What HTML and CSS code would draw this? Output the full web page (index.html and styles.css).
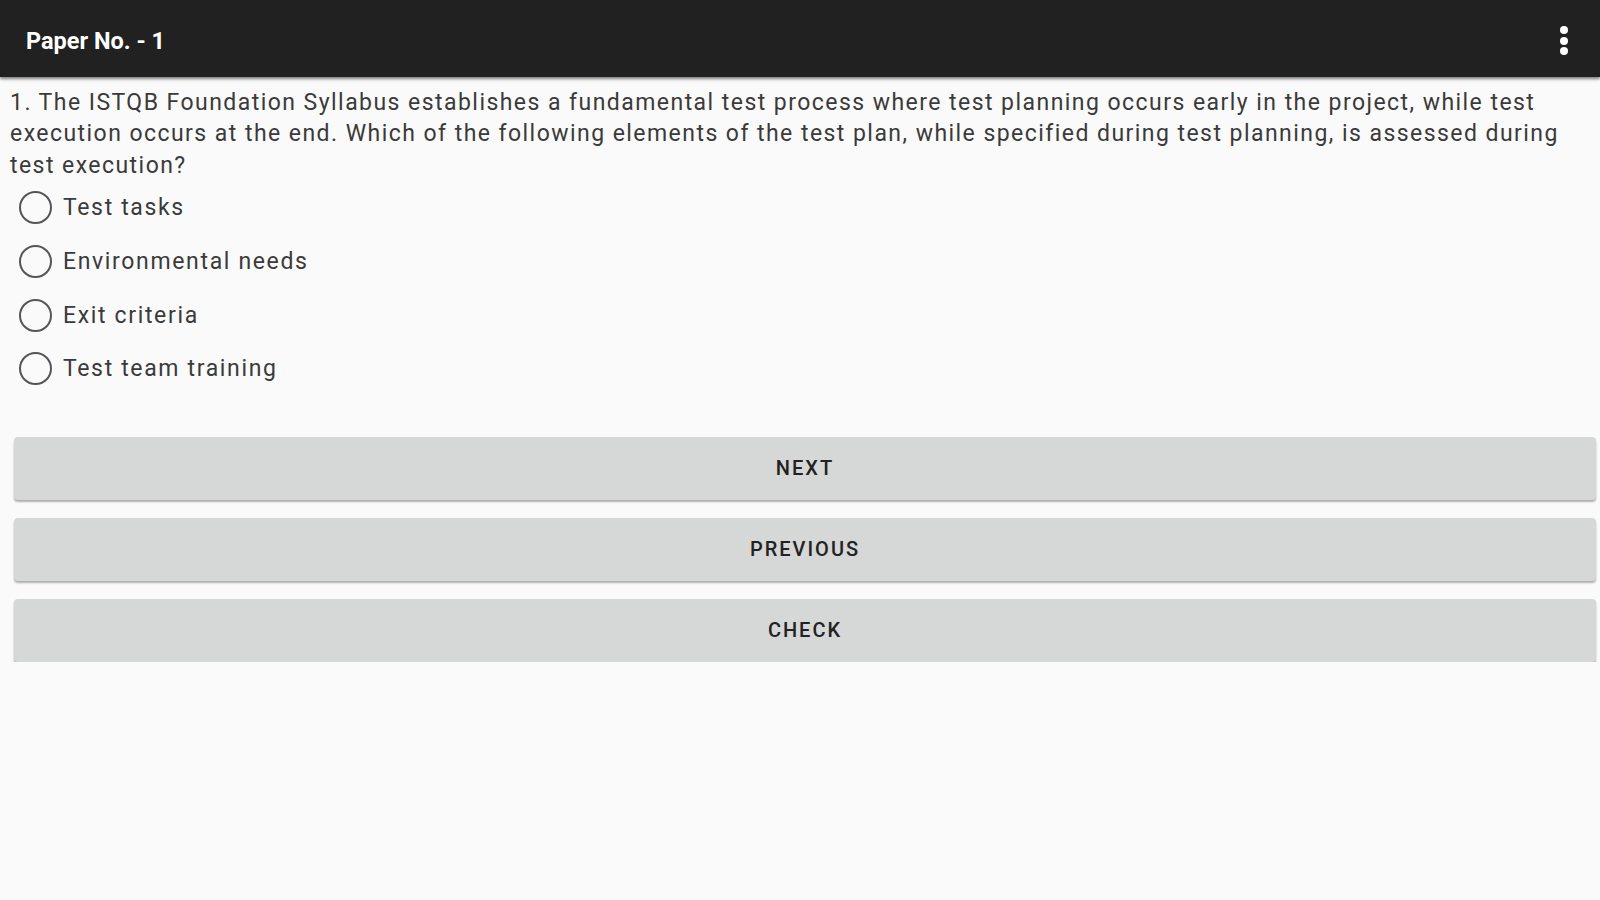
FILE: index.html
```html
<!DOCTYPE html>
<html lang="en">
<head>
<meta charset="utf-8">
<title>Paper No. - 1</title>
<link rel="stylesheet" href="styles.css">
</head>
<body>
<header class="appbar">
  <div class="appbar-title">Paper No. - 1</div>
  <div class="overflow" aria-label="More options">
    <span class="dot"></span><span class="dot"></span><span class="dot"></span>
  </div>
</header>
<main class="content">
  <p class="question">1. The ISTQB Foundation Syllabus establishes a fundamental test process where test planning occurs early in the project, while test execution occurs at the end. Which of the following elements of the test plan, while specified during test planning, is assessed during test execution?</p>
  <div class="options">
    <label class="option"><span class="radio"></span><span class="option-text">Test tasks</span></label>
    <label class="option"><span class="radio"></span><span class="option-text">Environmental needs</span></label>
    <label class="option"><span class="radio"></span><span class="option-text">Exit criteria</span></label>
    <label class="option"><span class="radio"></span><span class="option-text">Test team training</span></label>
  </div>
  <div class="actions">
    <button class="btn">NEXT</button>
    <button class="btn">PREVIOUS</button>
    <button class="btn">CHECK</button>
  </div>
</main>
</body>
</html>
```

FILE: styles.css
```css
* { box-sizing: border-box; }

html, body {
  margin: 0;
  padding: 0;
  background: #fafafa;
  font-family: Roboto, "Noto Sans", "Liberation Sans", sans-serif;
}

.appbar {
  height: 77px;
  background: #212121;
  display: flex;
  align-items: center;
  justify-content: space-between;
  padding: 0 32px 0 26px;
  box-shadow: 0 2px 3px rgba(0, 0, 0, 0.5);
  position: relative;
  z-index: 1;
}

.appbar-title {
  color: #ffffff;
  font-size: 23.5px;
  font-weight: 700;
  margin-top: 5px;
}

.overflow {
  display: flex;
  flex-direction: column;
  align-items: center;
  gap: 2.5px;
  margin-top: 4px;
}

.dot {
  width: 8px;
  height: 8px;
  border-radius: 50%;
  background: #ffffff;
}

.content {
  padding: 9.5px 4px 0 10px;
}

.question {
  margin: 0;
  font-size: 23px;
  line-height: 31.5px;
  letter-spacing: 1.45px;
  color: #3a3a3a;
}

.options {
  display: flex;
  flex-direction: column;
}

.option {
  height: 53.7px;
  display: flex;
  align-items: center;
  padding-left: 9px;
}

.radio {
  width: 33px;
  height: 33px;
  border: 2.5px solid #555555;
  border-radius: 50%;
  flex: none;
}

.option-text {
  margin-left: 11px;
  font-size: 23px;
  letter-spacing: 1.65px;
  color: #3a3a3a;
}

.actions {
  margin-top: 41px;
  padding-left: 4px;
  display: flex;
  flex-direction: column;
  gap: 18px;
}

.btn {
  height: 63px;
  width: 100%;
  border: none;
  border-radius: 4px;
  background: #d6d7d7;
  box-shadow: 0 2px 2px rgba(0, 0, 0, 0.3);
  font-family: Roboto, "Noto Sans", "Liberation Sans", sans-serif;
  font-size: 20px;
  font-weight: 500;
  color: #222222;
  letter-spacing: 2px;
}
```
